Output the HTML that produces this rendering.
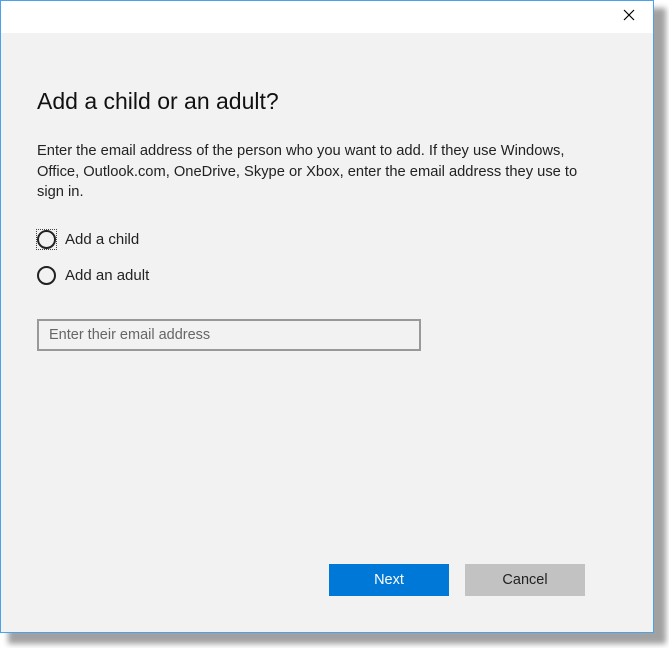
<!DOCTYPE html>
<html><head><style>
html,body{margin:0;padding:0;}
body{width:669px;height:648px;background:#fff;position:relative;overflow:hidden;font-family:"Liberation Sans",sans-serif;color:#000;}
.shadow{position:absolute;left:8px;top:8px;width:658px;height:636px;background:#8a8a8a;filter:blur(3px);opacity:.8;}
.win{position:absolute;left:0;top:0;width:654px;height:633px;box-sizing:border-box;border:1px solid #4aa3e8;background:#f2f2f2;}
.win>*{margin-left:-1px;margin-top:-1px;}
.win>.title{margin:0;}
.title{position:absolute;left:0;top:0;width:652px;height:32px;background:#fff;}
.x{position:absolute;left:623px;top:9px;}
h1{position:absolute;left:37px;top:88px;margin:0;font-weight:normal;font-size:23px;color:#111;white-space:nowrap;}
.p{position:absolute;left:37px;top:141px;font-size:14.7px;line-height:20.5px;color:#222;white-space:nowrap;}
.r{position:absolute;left:37px;width:19px;height:19px;border:2px solid #222;border-radius:50%;box-sizing:border-box;}
.rl{position:absolute;left:65px;font-size:15px;color:#222;}
.inp{position:absolute;left:37px;top:319px;width:384px;height:32px;border:2px solid #999;box-sizing:border-box;background:#f2f2f2;}
.inp span{position:absolute;left:10px;top:6px;font-size:14.5px;color:#666;}
.btn{position:absolute;top:564px;width:120px;height:32px;font-size:14.5px;text-align:center;line-height:32px;}
.dot{position:absolute;left:36px;top:229px;width:21px;height:21px;border:1px dotted #444;box-sizing:border-box;}
</style></head><body>
<div class="shadow"></div>
<div class="win">
<div class="title"></div>
<svg class="x" width="12" height="12" viewBox="0 0 12 12"><path d="M1 1L11 11M11 1L1 11" stroke="#000" stroke-width="1.2"/></svg>
<h1>Add a child or an adult?</h1>
<div class="p">Enter the email address of the person who you want to add. If they use Windows,<br>Office, Outlook.com, OneDrive, Skype or Xbox, enter the email address they use to<br>sign in.</div>
<div class="dot"></div>
<div class="r" style="top:230px;"></div>
<div class="rl" style="top:231px;">Add a child</div>
<div class="r" style="top:266px;"></div>
<div class="rl" style="top:267px;">Add an adult</div>
<div class="inp"><span>Enter their email address</span></div>
<div class="btn" style="left:329px;background:#0078d7;color:#fff;">Next</div>
<div class="btn" style="left:465px;background:#c2c2c2;color:#222;">Cancel</div>
</div>
</body></html>
